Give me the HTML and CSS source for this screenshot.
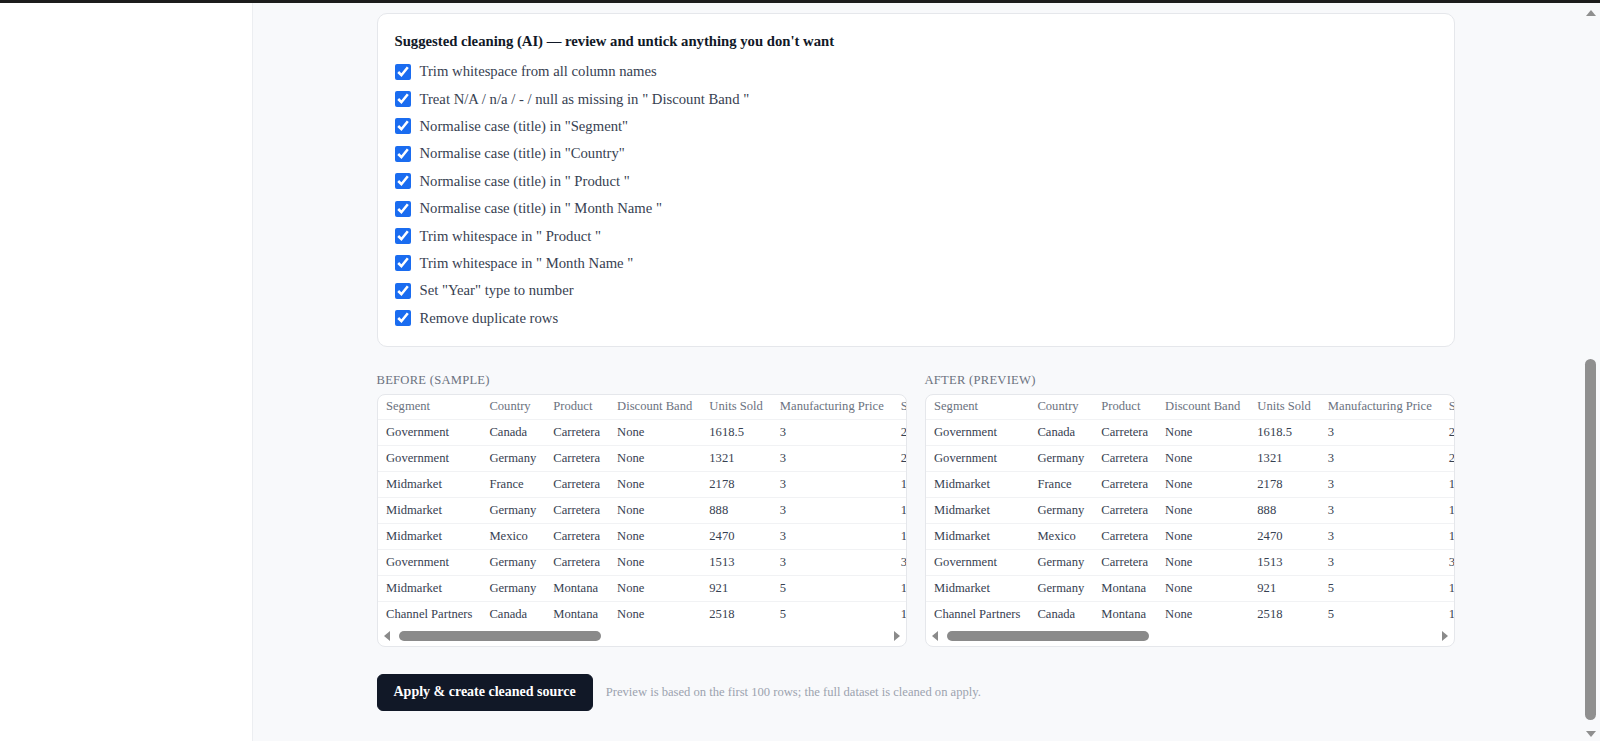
FILE: index.html
```html
<!DOCTYPE html>
<html>
<head>
<meta name="viewport" content="width=device-width, initial-scale=1">
<link rel="stylesheet" href="styles.css">
</head>
<body>

<div class="topbar"></div>

<div class="layout">
  <div class="sidebar"></div>

  <div class="main">
    <div class="content">

      <div class="card">
        <h3 class="card-title">Suggested cleaning (AI) — review and untick anything you don't want</h3>
        <label class="step"><input type="checkbox" checked> Trim whitespace from all column names</label>
        <label class="step"><input type="checkbox" checked> Treat N/A / n/a / - / null as missing in " Discount Band "</label>
        <label class="step"><input type="checkbox" checked> Normalise case (title) in "Segment"</label>
        <label class="step"><input type="checkbox" checked> Normalise case (title) in "Country"</label>
        <label class="step"><input type="checkbox" checked> Normalise case (title) in " Product "</label>
        <label class="step"><input type="checkbox" checked> Normalise case (title) in " Month Name "</label>
        <label class="step"><input type="checkbox" checked> Trim whitespace in " Product "</label>
        <label class="step"><input type="checkbox" checked> Trim whitespace in " Month Name "</label>
        <label class="step"><input type="checkbox" checked> Set "Year" type to number</label>
        <label class="step"><input type="checkbox" checked> Remove duplicate rows</label>
      </div>

      <div class="compare">
        <div class="pane">
          <div class="pane-label">BEFORE (SAMPLE)</div>
          <div class="table-box">
            <div class="table-wrap">
              <table class="preview">
                <thead>
                  <tr><th>Segment</th><th>Country</th><th>Product</th><th>Discount Band</th><th>Units Sold</th><th>Manufacturing Price</th><th>Sale Price</th></tr>
                </thead>
                <tbody id="beforeRows"></tbody>
              </table>
            </div>
            <div class="hscroll">
              <span class="arrow-left"></span>
              <div class="track"><div class="thumb"></div></div>
              <span class="arrow-right"></span>
            </div>
          </div>
        </div>

        <div class="pane">
          <div class="pane-label">AFTER (PREVIEW)</div>
          <div class="table-box">
            <div class="table-wrap">
              <table class="preview">
                <thead>
                  <tr><th>Segment</th><th>Country</th><th>Product</th><th>Discount Band</th><th>Units Sold</th><th>Manufacturing Price</th><th>Sale Price</th></tr>
                </thead>
                <tbody id="afterRows"></tbody>
              </table>
            </div>
            <div class="hscroll">
              <span class="arrow-left"></span>
              <div class="track"><div class="thumb"></div></div>
              <span class="arrow-right"></span>
            </div>
          </div>
        </div>
      </div>

      <div class="actions">
        <button class="apply-btn">Apply &amp; create cleaned source</button>
        <span class="note">Preview is based on the first 100 rows; the full dataset is cleaned on apply.</span>
      </div>

    </div>
  </div>

  <div class="vscroll">
    <span class="arrow-up"></span>
    <div class="vthumb"></div>
    <span class="arrow-down"></span>
  </div>
</div>

<script>
// first rows of the source sheet
var rows = [
  ["Government", "Canada", "Carretera", "None", "1618.5", "3", "20"],
  ["Government", "Germany", "Carretera", "None", "1321", "3", "20"],
  ["Midmarket", "France", "Carretera", "None", "2178", "3", "15"],
  ["Midmarket", "Germany", "Carretera", "None", "888", "3", "15"],
  ["Midmarket", "Mexico", "Carretera", "None", "2470", "3", "15"],
  ["Government", "Germany", "Carretera", "None", "1513", "3", "350"],
  ["Midmarket", "Germany", "Montana", "None", "921", "5", "15"],
  ["Channel Partners", "Canada", "Montana", "None", "2518", "5", "12"]
];

function fillRows(id) {
  var body = document.getElementById(id);
  for (var i = 0; i < rows.length; i++) {
    var tr = document.createElement("tr");
    for (var j = 0; j < rows[i].length; j++) {
      var td = document.createElement("td");
      td.textContent = rows[i][j];
      tr.appendChild(td);
    }
    body.appendChild(tr);
  }
}

fillRows("beforeRows");
fillRows("afterRows");
</script>

</body>
</html>
```

FILE: styles.css
```css
* {
  box-sizing: border-box;
}

html, body {
  margin: 0;
  height: 100%;
  overflow: hidden;
}

body {
  font-family: "Liberation Serif", "Times New Roman", serif;
  background: #f8f9fb;
  color: #374151;
  display: flex;
  flex-direction: column;
}

/* thin dark strip at the very top */
.topbar {
  height: 3px;
  background: #1c1c1c;
  flex-shrink: 0;
}

.layout {
  flex: 1;
  display: flex;
  min-height: 0;
}

.sidebar {
  width: 253px;
  background: #fff;
  border-right: 1px solid #eceef1;
  flex-shrink: 0;
}

.main {
  flex: 1;
  padding: 10px 5px 0 0;
  display: flex;
  justify-content: center;
}

.content {
  width: 1078px;
}

/* Suggestions card */
.card {
  background: #fff;
  border: 1px solid #e5e7eb;
  border-radius: 10px;
  padding: 17px 16px 14px 17px;
}

.card-title {
  margin: 0 0 7px;
  font-size: 14.7px;
  line-height: 20px;
  font-weight: bold;
  color: #111827;
}

.step {
  display: flex;
  align-items: center;
  gap: 9px;
  height: 27.4px;
  font-size: 14.7px;
  color: #374151;
}

.step input {
  margin: 0;
  width: 16px;
  height: 16px;
  accent-color: #1a6cf0;
}

/* Before / after tables */
.compare {
  display: grid;
  grid-template-columns: 1fr 1fr;
  gap: 18px;
  margin-top: 26px;
}

.pane {
  min-width: 0;
}

.pane-label {
  font-size: 12.6px;
  line-height: 15px;
  color: #6b7280;
  letter-spacing: 0.25px;
  margin-bottom: 6px;
}

.table-box {
  background: #fff;
  border: 1px solid #e5e7eb;
  border-radius: 8px;
  overflow: hidden;
}

.table-wrap {
  overflow: hidden;
}

.preview {
  border-collapse: collapse;
  font-size: 12.6px;
  white-space: nowrap;
}

.preview th {
  text-align: left;
  font-weight: normal;
  color: #6b7280;
  padding: 4px 8.5px 5px;
  line-height: 15px;
  border-bottom: 1px solid #f1f2f4;
}

.preview td {
  color: #374151;
  padding: 5px 8.5px;
  line-height: 15px;
  border-bottom: 1px solid #f1f2f4;
}

.preview tr:last-child td {
  border-bottom: none;
}

/* horizontal scrollbar under each table */
.hscroll {
  display: flex;
  align-items: center;
  height: 19px;
  padding: 0 6px;
}

.arrow-left {
  width: 0;
  height: 0;
  border-top: 5px solid transparent;
  border-bottom: 5px solid transparent;
  border-right: 6px solid #8a8a8a;
}

.arrow-right {
  width: 0;
  height: 0;
  border-top: 5px solid transparent;
  border-bottom: 5px solid transparent;
  border-left: 6px solid #8a8a8a;
}

.track {
  flex: 1;
  margin: 0 6px 0 9px;
}

.thumb {
  width: 202px;
  height: 10px;
  border-radius: 5px;
  background: #8a8a8a;
}

/* Footer action */
.actions {
  display: flex;
  align-items: center;
  gap: 13px;
  margin-top: 27px;
}

.apply-btn {
  height: 37px;
  padding: 0 16px;
  background: #111827;
  color: #fff;
  border: 1px solid #111827;
  border-radius: 6px;
  font-family: inherit;
  font-size: 14px;
  font-weight: bold;
  cursor: pointer;
}

.note {
  font-size: 12.6px;
  color: #9ca3af;
}

/* page scrollbar */
.vscroll {
  width: 17px;
  flex-shrink: 0;
  display: flex;
  flex-direction: column;
  align-items: center;
  padding-right: 2px;
}

.arrow-up {
  margin-top: 7px;
  width: 0;
  height: 0;
  border-left: 5px solid transparent;
  border-right: 5px solid transparent;
  border-bottom: 6px solid #8f8f8f;
}

.vthumb {
  margin-top: 343px;
  width: 11px;
  height: 361px;
  border-radius: 6px;
  background: #8f8f8f;
}

.arrow-down {
  margin-top: 11px;
  width: 0;
  height: 0;
  border-left: 5px solid transparent;
  border-right: 5px solid transparent;
  border-top: 6px solid #8f8f8f;
}
```
